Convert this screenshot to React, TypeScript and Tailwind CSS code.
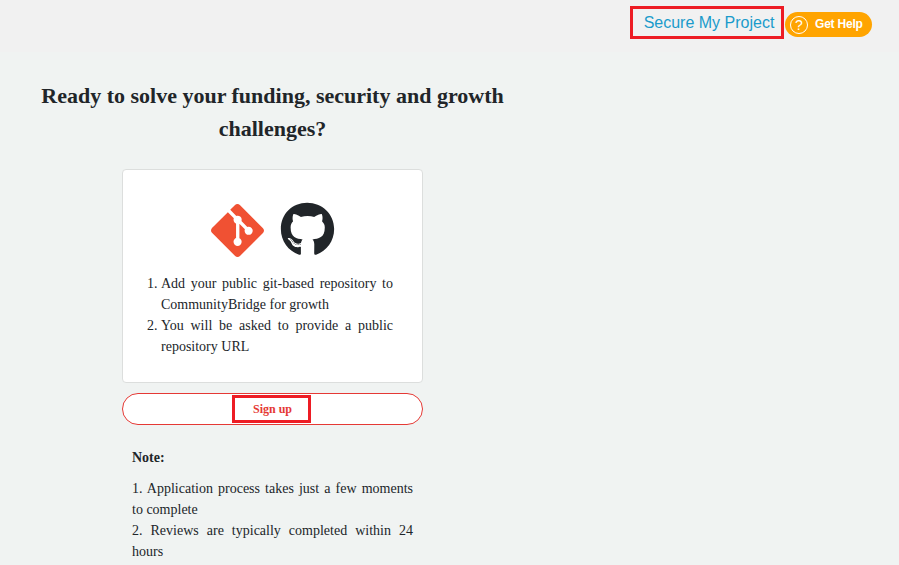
import { FaGithub } from "react-icons/fa";
import { SiGit } from "react-icons/si";

function Header() {
  return (
    <header className="flex h-[52px] items-start justify-end bg-[#f1f1f1] pt-[6px] pr-[27px] font-['Liberation_Sans',Arial,sans-serif]">
      <a className="flex h-[33px] w-[154px] items-center justify-center whitespace-nowrap border-3 border-[#ed1c24] pl-[4px] text-[16px] text-[#1a9bcb]">
        Secure My Project
      </a>
      <button className="mt-[6px] ml-px flex h-[25px] w-[87px] items-center rounded-full bg-[#ffa400] pl-[5px] text-[12px] font-bold text-white">
        <span className="flex size-[18px] items-center justify-center rounded-full border border-white text-[14px] font-normal leading-none">
          ?
        </span>
        <span className="mb-[2px] ml-[7px] whitespace-nowrap tracking-[-0.2px]">Get Help</span>
      </button>
    </header>
  );
}

export default function App() {
  return (
    <div className="h-[565px] overflow-hidden bg-[#f0f3f2] text-[#212529]">
      <Header />
      <main className="flex w-[545px] flex-col items-center pt-[27px] font-['Liberation_Serif','Times_New_Roman',serif]">
        <h1 className="w-[480px] text-center text-[22px] leading-[33px] font-bold">
          Ready to solve your funding, security and growth challenges?
        </h1>
        <section className="mt-[24px] h-[214px] w-[301px] rounded-[4px] border border-[#dcdedd] bg-white px-[29px] pt-[33px]">
          <div className="flex items-start justify-center gap-[16px]">
            <SiGit className="mt-px size-[53px] text-[#f05133]" />
            <FaGithub className="-mt-px size-[55px]" />
          </div>
          <ol className="mt-[16px] list-decimal pl-[9px] text-justify text-[14px] leading-[21px]">
            <li>Add your public git-based repository to CommunityBridge for growth</li>
            <li>You will be asked to provide a public repository URL</li>
          </ol>
        </section>
        <button className="mt-[10px] flex h-[32px] w-[301px] items-center justify-center rounded-full border border-[#e53935] bg-white pr-[2px]">
          <span className="flex h-[28px] w-[79px] items-center justify-center border-3 border-[#ed1c24] pl-[2px] text-[12px] font-bold text-[#e53935]">
            Sign up
          </span>
        </button>
        <section className="mt-[22px] w-[281px] text-[14px] leading-[21px]">
          <h2 className="mb-[10px] font-bold">Note:</h2>
          <p className="text-justify">1. Application process takes just a few moments to complete</p>
          <p className="text-justify">2. Reviews are typically completed within 24 hours</p>
        </section>
      </main>
    </div>
  );
}
